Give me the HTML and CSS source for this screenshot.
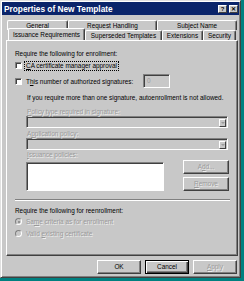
FILE: index.html
```html
<!DOCTYPE html>
<html lang="en">
  <head>
    <meta charset="UTF-8" />
    <title>Properties of New Template</title>
    <link rel="stylesheet" href="styles.css">
  </head>
  <body>
    <div class="window">
      <div class="titlebar">
        <span class="title">Properties of New Template</span>
        <span class="caption-btns">
          <span class="cap-btn">?</span>
          <span class="cap-btn">&#x2715;</span>
        </span>
      </div>

      <div class="tabs">
        <div class="tab-row back">
          <div class="tab w-general">General</div>
          <div class="tab w-request">Request Handling</div>
          <div class="tab w-subject">Subject Name</div>
        </div>
        <div class="tab-row front">
          <div class="tab selected w-issuance">Issuance Requirements</div>
          <div class="tab w-superseded">Superseded Templates</div>
          <div class="tab w-extensions">Extensions</div>
          <div class="tab w-security">Security</div>
        </div>
      </div>

      <div class="panel">
        <div class="line heading">Require the following for enrollment:</div>

        <div class="check-row row-1">
          <span class="checkbox"></span>
          <span class="focus"><u>C</u>A certificate manager approval</span>
        </div>

        <div class="check-row row-2">
          <span class="checkbox"></span>
          <span class="label">T<u>h</u>is number of authorized signatures:</span>
          <span class="edit">0</span>
        </div>

        <div class="line note">If you require more than one signature, autoenrollment is not allowed.</div>

        <div class="line field-label lbl-1 disabled"><u>P</u>olicy type required in signature:</div>
        <div class="combo"><span class="combo-arrow"></span></div>

        <div class="line field-label lbl-2 disabled">A<u>p</u>plication policy:</div>
        <div class="combo"><span class="combo-arrow"></span></div>

        <div class="line field-label lbl-3 disabled"><u>I</u>ssuance policies:</div>
        <div class="list-row">
          <div class="listbox"></div>
          <div class="side-btns">
            <div class="btn small disabled">A<u>d</u>d...</div>
            <div class="btn small disabled"><u>R</u>emove</div>
          </div>
        </div>

        <div class="separator"></div>

        <div class="line heading heading-2">Require the following for reenrollment:</div>

        <div class="radio-row radio-1 disabled">
          <span class="radio checked"></span>
          <span>Sa<u>m</u>e criteria as for enrollment</span>
        </div>
        <div class="radio-row radio-2 disabled">
          <span class="radio"></span>
          <span>Valid <u>e</u>xisting certificate</span>
        </div>
      </div>

      <div class="buttons">
        <div class="btn">OK</div>
        <div class="btn default">Cancel</div>
        <div class="btn disabled"><u>A</u>pply</div>
      </div>
    </div>
  </body>
</html>
```

FILE: styles.css
```css
body {
  margin: 0;
  background-color: #008080;
  font-family: "Liberation Sans", Arial, sans-serif;
  font-size: 6.4px;
  color: #000;
}

.window {
  box-sizing: border-box;
  width: 241px;
  padding: 1px 1px 3px 1px;
  background-color: #c8c8c8;
  border: 1px solid;
  border-color: #e0e0e0 #404040 #404040 #e0e0e0;
  box-shadow: inset 1px 1px #fff, inset -1px -1px #808080;
}

.titlebar {
  height: 13px;
  background-color: #0a246a;
  display: flex;
  justify-content: space-between;
  align-items: center;
  padding: 0 1px 0 2px;
}
.title {
  color: #fff;
  font-weight: bold;
  font-size: 8.3px;
}
.caption-btns {
  display: flex;
  gap: 2px;
}
.cap-btn {
  box-sizing: border-box;
  width: 9px;
  height: 8px;
  background-color: #c8c8c8;
  border: 1px solid;
  border-color: #fff #404040 #404040 #fff;
  font-size: 6px;
  font-weight: bold;
  line-height: 6px;
  text-align: center;
}

.tabs {
  margin-top: 5px;
  padding-left: 4px;
}
.tab-row {
  display: flex;
  height: 10px;
}
.tab-row.back {
  margin-left: 1px;
}
.tab-row.front {
  margin-left: 2px;
}
.tab {
  box-sizing: border-box;
  height: 10px;
  line-height: 9px;
  text-align: center;
  white-space: nowrap;
  border-top: 1px solid #fff;
  border-left: 1px solid #fff;
  border-right: 1px solid #404040;
  box-shadow: inset -1px 0 #808080;
  border-radius: 2px 2px 0 0;
  background-color: #c8c8c8;
}
.tab.selected {
  position: relative;
  z-index: 1;
  height: 12px;
  margin-top: -2px;
  margin-bottom: -1px;
  line-height: 11px;
}
.w-general { width: 61px; }
.w-request { width: 89px; }
.w-subject { width: 80px; }
.w-issuance { width: 77px; }
.w-superseded { width: 77px; }
.w-extensions { width: 41px; }
.w-security { width: 33px; }

.panel {
  box-sizing: border-box;
  height: 216px;
  margin: 0 1px 0 4px;
  padding: 0 8px;
  border: 1px solid;
  border-color: #fff #404040 #404040 #fff;
  box-shadow: inset -1px -1px #808080;
  overflow: hidden;
}

.line {
  height: 9px;
  line-height: 9px;
  white-space: nowrap;
}
.heading {
  margin-top: 8px;
}
.heading-2 {
  margin-top: 5px;
}

.disabled {
  color: #9a9a9a;
  text-shadow: 1px 1px 0 rgba(255, 255, 255, 0.7);
}

.check-row {
  display: flex;
  align-items: center;
  white-space: nowrap;
}
.row-1 {
  height: 9px;
  margin-top: 3px;
}
.row-2 {
  height: 14px;
  margin-top: 4px;
}
.checkbox {
  box-sizing: border-box;
  width: 7px;
  height: 7px;
  margin-right: 3px;
  background-color: #fff;
  border: 1px solid;
  border-color: #808080 #fff #fff #808080;
  box-shadow: inset 1px 1px #404040;
  flex-shrink: 0;
}
.focus {
  outline: 1px dotted #000;
  padding: 0 1px;
  line-height: 8px;
}
.label {
  margin-left: 1px;
  width: 117px;
}
.edit {
  box-sizing: border-box;
  width: 27px;
  height: 14px;
  padding-left: 3px;
  line-height: 12px;
  color: #9a9a9a;
  border: 1px solid;
  border-color: #808080 #fff #fff #808080;
  box-shadow: inset 1px 1px #404040;
}

.note {
  margin-top: 5px;
  margin-left: 12px;
}
.field-label {
  margin-left: 12px;
}
.lbl-1 { margin-top: 5px; }
.lbl-2 { margin-top: 1px; }
.lbl-3 { margin-top: 0; }

.combo {
  box-sizing: border-box;
  width: 202px;
  height: 12px;
  margin-left: 11px;
  border: 1px solid;
  border-color: #808080 #fff #fff #808080;
  box-shadow: inset 1px 1px #404040;
  display: flex;
  justify-content: flex-end;
  padding: 2px 1px 1px 2px;
}
.combo-arrow {
  box-sizing: border-box;
  width: 7px;
  height: 8px;
  border: 1px solid;
  border-color: #fff #404040 #404040 #fff;
  display: flex;
  justify-content: center;
  align-items: center;
}
.combo-arrow::after {
  content: "";
  border-left: 2px solid transparent;
  border-right: 2px solid transparent;
  border-top: 2px solid #9a9a9a;
}

.list-row {
  display: flex;
  height: 31px;
  margin-top: 1px;
  margin-left: 11px;
}
.listbox {
  box-sizing: border-box;
  width: 139px;
  height: 29px;
  margin-top: 2px;
  background-color: #fff;
  border: 1px solid;
  border-color: #808080 #fff #fff #808080;
  box-shadow: inset 1px 1px #404040;
}
.side-btns {
  display: flex;
  flex-direction: column;
  gap: 3px;
  margin-left: 19px;
}

.btn {
  box-sizing: border-box;
  width: 44px;
  height: 14px;
  line-height: 12px;
  text-align: center;
  border: 1px solid;
  border-color: #fff #404040 #404040 #fff;
  box-shadow: inset -1px -1px #808080;
}
.btn.small {
  width: 46px;
}
.btn.default {
  border: 1px solid #000;
  box-shadow: inset 1px 1px #fff, inset -1px -1px #404040, inset -2px -2px #808080;
}

.separator {
  width: 215px;
  height: 0;
  margin-top: 8px;
  border-top: 1px solid #808080;
  border-bottom: 1px solid #fff;
}

.radio-row {
  display: flex;
  align-items: center;
  height: 9px;
  white-space: nowrap;
}
.radio-1 { margin-top: 2px; }
.radio-2 { margin-top: 3px; }
.radio {
  box-sizing: border-box;
  width: 7px;
  height: 7px;
  margin-right: 4px;
  border-radius: 50%;
  background-color: #c8c8c8;
  border: 1px solid;
  border-color: #808080 #fff #fff #808080;
  display: flex;
  justify-content: center;
  align-items: center;
  text-shadow: none;
}
.radio.checked::after {
  content: "";
  width: 2px;
  height: 2px;
  border-radius: 50%;
  background-color: #808080;
}

.buttons {
  display: flex;
  justify-content: flex-end;
  gap: 4px;
  margin-top: 4px;
  padding-right: 2px;
}
```
